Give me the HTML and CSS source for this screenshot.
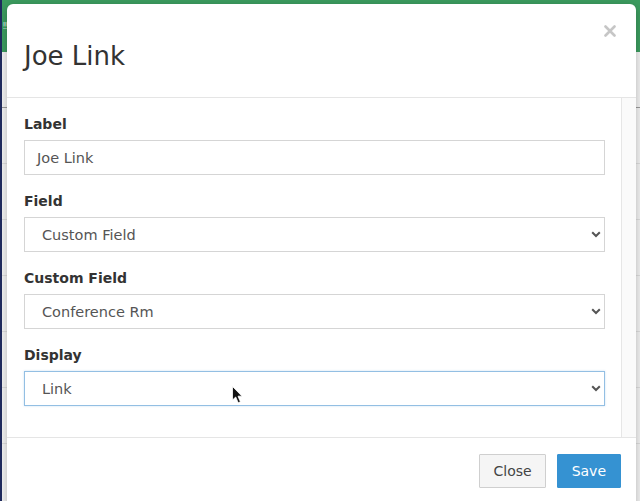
FILE: index.html
```html
<!DOCTYPE html>
<html lang="en">
<head>
    <meta charset="UTF-8">
    <meta name="viewport" content="width=device-width, initial-scale=1.0">
    <title>Joe Link</title>
    <link rel="stylesheet" href="styles.css">
</head>
<body>

    <div class="page">
        <div class="topbar"><span class="topbar-mark">&#8252;</span></div>
        <div class="rows">
            <div class="row row-dark"></div>
            <div class="row"></div>
            <div class="row"></div>
            <div class="row"></div>
            <div class="row"></div>
            <div class="row"></div>
            <div class="row"></div>
        </div>
    </div>

    <div class="modal">
        <div class="modal-header">
            <h1 class="modal-title">Joe Link</h1>
            <button class="close" aria-label="Close">
                <svg width="12" height="12" viewBox="0 0 12 12"><path d="M1.5 1.5 L10.5 10.5 M10.5 1.5 L1.5 10.5" stroke="#c6c6c6" stroke-width="2.6" stroke-linecap="round"/></svg>
            </button>
        </div>

        <div class="modal-body">
            <div class="form">
                <div class="group">
                    <label>Label</label>
                    <div class="input">Joe Link</div>
                </div>
                <div class="group">
                    <label>Field</label>
                    <div class="select">
                        <span>Custom Field</span>
                        <svg width="10" height="7" viewBox="0 0 10 7"><path d="M1.2 1.2 L5 5 L8.8 1.2" fill="none" stroke="#555" stroke-width="2"/></svg>
                    </div>
                </div>
                <div class="group">
                    <label>Custom Field</label>
                    <div class="select">
                        <span>Conference Rm</span>
                        <svg width="10" height="7" viewBox="0 0 10 7"><path d="M1.2 1.2 L5 5 L8.8 1.2" fill="none" stroke="#555" stroke-width="2"/></svg>
                    </div>
                </div>
                <div class="group">
                    <label>Display</label>
                    <div class="select focus">
                        <span>Link</span>
                        <svg width="10" height="7" viewBox="0 0 10 7"><path d="M1.2 1.2 L5 5 L8.8 1.2" fill="none" stroke="#555" stroke-width="2"/></svg>
                    </div>
                </div>
            </div>
            <div class="scrolltrack"></div>
        </div>

        <div class="modal-footer">
            <button class="btn">Close</button>
            <button class="btn btn-primary">Save</button>
        </div>
    </div>

    <!-- puntero del raton -->
    <svg class="cursor" width="11" height="18" viewBox="0 0 11 18"><path d="M0.5 0.5 L0.5 14 L3.7 11 L6.2 16.8 L8.4 15.8 L6 10.2 L10 10.2 Z" fill="#111" stroke="#fff" stroke-width="0.8"/></svg>

</body>
</html>
```

FILE: styles.css
```css
html, body {
    margin: 0;
    padding: 0;
}
body {
    width: 640px;
    height: 501px;
    overflow: hidden;
    font-family: "DejaVu Sans", Verdana, sans-serif;
    color: #333;
    background-color: #f1f1f1;
}
.page {
    border-left: 2px solid #1f2a5e;
    height: 501px;
}
.topbar {
    height: 52px;
    background-color: #3c9c5f;
    display: flex;
    align-items: center;
}
.topbar-mark {
    color: #dfeee4;
    font-size: 8px;
    padding-left: 1px;
}
.row {
    height: 55px;
    border-bottom: 1px solid #dcdcdc;
}
.row-dark {
    border-bottom: 1px solid #9a9a9a;
}
.modal {
    position: absolute;
    top: 4px;
    left: 7px;
    width: 629px;
    height: 520px;
    background-color: #fff;
    border-radius: 6px 6px 0 0;
    box-shadow: 0 2px 8px rgba(0, 0, 0, 0.25);
}
.modal-header {
    display: flex;
    align-items: flex-start;
    padding: 21px 20px 25px 17px;
    border-bottom: 1px solid #e5e5e5;
}
.modal-title {
    flex: 1;
    margin: 16px 0 0 0;
    font-size: 26px;
    font-weight: normal;
    line-height: 31px;
    color: #333;
}
.close {
    border: none;
    background: none;
    padding: 0;
    width: 12px;
    height: 12px;
    display: block;
}
.close svg {
    display: block;
}
.modal-body {
    display: flex;
    height: 339px;
}
.form {
    flex: 1;
    padding: 16px 16px 0 17px;
}
.scrolltrack {
    width: 14px;
    background-color: #fafafa;
    border-left: 1px solid #e6e6e6;
}
.group {
    margin-bottom: 16px;
}
label {
    display: block;
    font-size: 14px;
    font-weight: bold;
    line-height: 20px;
    margin-bottom: 6px;
    color: #333;
}
.input, .select {
    box-sizing: border-box;
    height: 35px;
    border: 1px solid #d5d5d5;
    font-size: 14.5px;
    color: #555;
    display: flex;
    align-items: center;
}
.input {
    padding-left: 12px;
}
.select {
    justify-content: space-between;
    padding: 0 3px 0 17px;
}
.select svg {
    display: block;
}
.select.focus {
    border-color: #93bfe3;
    box-shadow: 0 0 2px rgba(102, 160, 220, 0.35);
}
.modal-footer {
    display: flex;
    justify-content: flex-end;
    gap: 11px;
    padding: 16px 15px 0 0;
    border-top: 1px solid #e5e5e5;
}
.btn {
    height: 34px;
    padding: 0 13px;
    font-family: "DejaVu Sans", Verdana, sans-serif;
    font-size: 14px;
    color: #444;
    background-color: #f5f5f5;
    border: 1px solid #cfcfcf;
    border-radius: 1px;
}
.btn-primary {
    padding: 0 14px;
    color: #fff;
    background-color: #3592d2;
    border-color: #3592d2;
}
.cursor {
    position: absolute;
    left: 232px;
    top: 386px;
}
```
